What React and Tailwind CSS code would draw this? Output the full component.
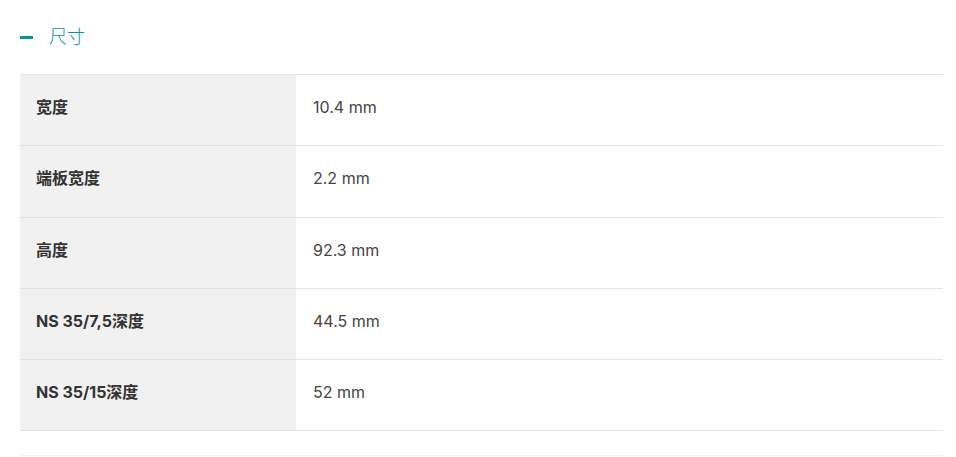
export default function App() {
  const rows = [
    ["宽度", "10.4 mm", "h-[71px]"],
    ["端板宽度", "2.2 mm", "h-[72px]"],
    ["高度", "92.3 mm", "h-[71px]"],
    ["NS 35/7,5深度", "44.5 mm", "h-[71px]"],
    ["NS 35/15深度", "52 mm", "h-[71px]"],
  ];
  return (
    <div
      className="w-[956px] h-[457px] bg-white overflow-hidden"
      style={{ fontFamily: 'Inter, "Noto Sans CJK SC", sans-serif' }}
    >
      <div className="px-[20px]">
        <div className="flex items-center h-[74px] pt-[1px] pb-[1px]">
          <span className="block w-[13px] h-[3px] bg-[#0098a1] mr-[16px]"></span>
          <span className="text-[18px] leading-[22px] text-[#0098a1] font-light">尺寸</span>
        </div>
        <div className="border-t border-[#e3e3e3] w-[923px]">
          {rows.map(([k, v, h]) => (
            <div key={k} className={`flex border-b border-[#e3e3e3] ${h}`}>
              <div className="w-[276px] bg-[#f1f1f1] pl-[16px] pt-[22px] text-[16px] leading-[20px] font-bold text-[#333]">
                {k}
              </div>
              <div className="flex-1 pl-[17px] pt-[22px] text-[16px] leading-[20px] text-[#444]">
                {v}
              </div>
            </div>
          ))}
        </div>
        <div className="mt-[24px] border-t border-[#f3f3f3] w-[923px]"></div>
      </div>
    </div>
  );
}
